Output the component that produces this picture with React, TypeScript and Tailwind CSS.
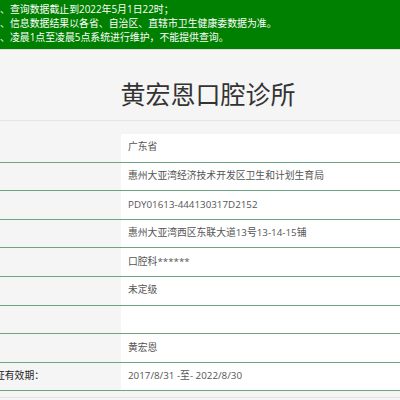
import React from "react";

const rows: { label?: string; value: string }[] = [
  { value: "广东省" },
  { value: "惠州大亚湾经济技术开发区卫生和计划生育局" },
  { value: "PDY01613-444130317D2152" },
  { value: "惠州大亚湾西区东联大道13号13-14-15铺" },
  { value: "口腔科******" },
  { value: "未定级" },
  { value: "" },
  { value: "黄宏恩" },
  { label: "证有效期：", value: "2017/8/31 -至- 2022/8/30" },
];

export default function App() {
  return (
    <div
      className="w-[400px] h-[400px] overflow-hidden bg-[#f5f5f5]"
      style={{ fontFamily: '"Open Sans", "Noto Sans CJK SC", sans-serif' }}
    >
      <div className="h-[49px] bg-[#008000] pt-[2px] text-white text-[9.9px] leading-[14px]">
        <div className="whitespace-nowrap">、查询数据截止到2022年5月1日22时；</div>
        <div className="whitespace-nowrap">、信息数据结果以各省、自治区、直辖市卫生健康委数据为准。</div>
        <div className="whitespace-nowrap">、凌晨1点至凌晨5点系统进行维护，不能提供查询。</div>
      </div>
      <div className="h-px bg-[#dcdcdc]" />
      <div className="h-[71px] border-b border-[#e4e4e4] flex items-end justify-center pb-[12px]">
        <div className="ml-[16px] text-[25px] leading-[30px] text-[#333]" style={{ fontFamily: '"Noto Sans CJK SC", sans-serif' }}>
          黄宏恩口腔诊所
        </div>
      </div>
      <div className="mt-[13px] flex flex-col">
        {rows.map((r, i) => (
          <div key={i} className="h-[28.6px] flex border-b border-[#6aa682]">
            <div className="w-[121px] shrink-0 flex items-center">
              {r.label && (
                <span className="ml-[-5px] text-[9.8px] text-[#222] whitespace-nowrap">{r.label}</span>
              )}
            </div>
            <div className="flex-1 bg-white flex items-center pl-[7px] text-[9.8px] text-[#555] whitespace-nowrap">
              {r.value}
            </div>
          </div>
        ))}
      </div>
      <div className="mt-[6px] h-px bg-[#e4e4e4]" />
    </div>
  );
}
